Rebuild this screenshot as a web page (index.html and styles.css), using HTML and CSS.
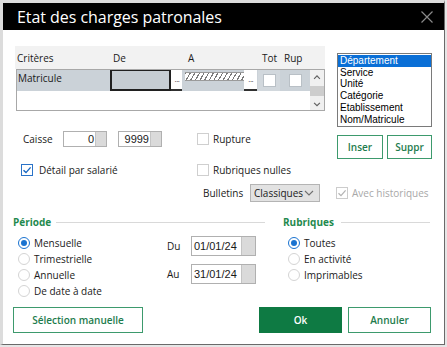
FILE: index.html
```html
<!DOCTYPE html>
<html lang="fr">
<head>
<meta charset="utf-8">
<title>Etat des charges patronales</title>
<link rel="stylesheet" href="styles.css">
</head>
<body>
<div class="window">
  <div class="titlebar">
    <span class="title">Etat des charges patronales</span>
    <svg class="close" width="12" height="12" viewBox="0 0 12 12"><path d="M0.5 0.5 L11.5 11.5 M11.5 0.5 L0.5 11.5" stroke="#8a8a8a" stroke-width="1.2" fill="none"/></svg>
  </div>
  <div class="content">
    <div class="top">
      <div class="left">
        <div class="grid">
          <div class="grid-head">
            <span class="h-crit">Critères</span>
            <span class="h-de">De</span>
            <span class="h-a">A</span>
            <span class="h-tot">Tot</span>
            <span class="h-rup">Rup</span>
          </div>
          <div class="grid-box">
            <div class="grid-rows">
              <div class="grid-row">
                <div class="c-crit">Matricule</div>
                <div class="c-de"></div>
                <div class="c-btn">...</div>
                <div class="c-sp"></div>
                <div class="c-a"><div class="hatch"></div></div>
                <div class="c-btn c-btn2">...</div>
                <div class="c-tot"><span class="gbox"></span></div>
                <div class="c-rup"><span class="gbox"></span></div>
              </div>
            </div>
            <div class="vscroll">
              <svg width="14" height="12" viewBox="0 0 14 12"><path d="M4 7 L7 4 L10 7" stroke="#606060" stroke-width="1.2" fill="none"/></svg>
              <div class="thumb"></div>
              <div class="track"></div>
              <svg width="14" height="12" viewBox="0 0 14 12"><path d="M4 5 L7 8 L10 5" stroke="#606060" stroke-width="1.2" fill="none"/></svg>
            </div>
          </div>
        </div>
        <div class="row-caisse">
          <span class="lbl-caisse">Caisse</span>
          <div class="spin"><span class="val">0</span><span class="spin-btn"></span></div>
          <div class="spin spin2"><span class="val">9999</span><span class="spin-btn"></span></div>
          <label class="chk chk-rupture"><span class="box"></span>Rupture</label>
        </div>
        <div class="row-detail">
          <label class="chk chk-detail"><span class="box checked"><svg width="10" height="10" viewBox="0 0 10 10"><path d="M1.5 5.2 L4 7.6 L8.6 2.4" stroke="#1565c0" stroke-width="1.4" fill="none"/></svg></span>Détail par salarié</label>
          <label class="chk chk-nulles"><span class="box"></span>Rubriques nulles</label>
        </div>
      </div>
      <div class="right">
        <ul class="listbox">
          <li class="sel">Département</li>
          <li>Service</li>
          <li>Unité</li>
          <li>Catégorie</li>
          <li>Etablissement</li>
          <li>Nom/Matricule</li>
        </ul>
        <div class="list-btns">
          <button class="btn btn-small">Inser</button>
          <button class="btn btn-small btn-suppr">Suppr</button>
        </div>
      </div>
    </div>
    <div class="row-bulletins">
      <span class="lbl-bull">Bulletins</span>
      <div class="select">Classiques<svg width="10" height="6" viewBox="0 0 10 6"><path d="M1 1 L5 5 L9 1" stroke="#707070" stroke-width="1.1" fill="none"/></svg></div>
      <label class="chk chk-hist"><span class="box disabled"><svg width="10" height="10" viewBox="0 0 10 10"><path d="M1.5 5.2 L4 7.6 L8.6 2.4" stroke="#b4b4b4" stroke-width="1.3" fill="none"/></svg></span>Avec historiques</label>
    </div>
    <div class="sections">
      <div class="sec sec-periode">
        <div class="sec-head"><span class="sec-title">Période</span><span class="sec-line"></span></div>
        <div class="periode-body">
          <div class="radios">
            <label class="radio"><span class="dot on"></span>Mensuelle</label>
            <label class="radio"><span class="dot"></span>Trimestrielle</label>
            <label class="radio"><span class="dot"></span>Annuelle</label>
            <label class="radio"><span class="dot"></span>De date à date</label>
          </div>
          <div class="dates">
            <div class="date-row"><span class="lbl-date">Du</span><div class="datefield"><span class="val">01/01/24</span><span class="spin-btn"></span></div></div>
            <div class="date-row"><span class="lbl-date">Au</span><div class="datefield"><span class="val">31/01/24</span><span class="spin-btn"></span></div></div>
          </div>
        </div>
      </div>
      <div class="sec sec-rub">
        <div class="sec-head"><span class="sec-title">Rubriques</span><span class="sec-line"></span></div>
        <div class="radios">
          <label class="radio"><span class="dot on"></span>Toutes</label>
          <label class="radio"><span class="dot"></span>En activité</label>
          <label class="radio"><span class="dot"></span>Imprimables</label>
        </div>
      </div>
    </div>
    <div class="footer">
      <button class="btn btn-sel">Sélection manuelle</button>
      <div class="footer-right">
        <button class="btn btn-ok">Ok</button>
        <button class="btn btn-cancel">Annuler</button>
      </div>
    </div>
  </div>
</div>
</body>
</html>
```
FILE: styles.css
```css
html, body {
  margin: 0;
  padding: 0;
  background: #e6e6e6;
}
body {
  font-family: "Open Sans", "Noto Sans", sans-serif;
  font-size: 10px;
  color: #1a1a1a;
}
.window {
  width: 445px;
  height: 345px;
  box-sizing: border-box;
  border-top: 3px solid #dcdcdc;
  border-left: 3px solid #dcdcdc;
  border-right: 1px solid #6a6a6a;
  border-bottom: 1px solid #6a6a6a;
  background: #fff;
  display: flex;
  flex-direction: column;
}
.titlebar {
  height: 27px;
  background: #000;
  display: flex;
  align-items: center;
  justify-content: space-between;
  padding: 0 11px 0 14px;
  flex-shrink: 0;
}
.title {
  color: #fff;
  font-size: 16px;
  letter-spacing: -0.05px;
}
.content {
  padding: 0 10px;
}
.top {
  display: flex;
  margin-top: 16px;
}
.left {
  width: 312px;
}
.grid {
  margin-left: 2px;
  width: 310px;
}
.grid-head {
  height: 23px;
  background: #f2f2f2;
  position: relative;
}
.grid-head span {
  position: absolute;
  top: 5px;
}
.h-crit { left: 2px; }
.h-de { left: 98px; }
.h-a { left: 173px; }
.h-tot { left: 247px; }
.h-rup { left: 269px; }
.grid-box {
  margin-left: 1px;
  height: 42px;
  box-sizing: border-box;
  border: 1px solid #a8a8a8;
  display: flex;
  background: #fff;
}
.grid-rows {
  width: 293px;
}
.grid-row {
  height: 21px;
  display: flex;
  background: #cbd2d8;
}
.c-crit {
  width: 93px;
  padding-left: 1px;
  box-sizing: border-box;
  line-height: 17px;
}
.c-de {
  width: 62px;
  box-sizing: border-box;
  border: 2px solid #202020;
  border-top-width: 1px;
  background: #c6cdd3;
}
.c-btn {
  width: 11px;
  background: #fff;
  border-bottom: 2px solid #303030;
  box-sizing: border-box;
  font-size: 8px;
  line-height: 15px;
  padding-top: 1px;
  text-align: center;
  color: #444;
  letter-spacing: -0.5px;
  overflow: hidden;
}
.c-btn2 { width: 13px; }
.c-sp { width: 3px; }
.c-a {
  width: 59px;
}
.hatch {
  height: 7px;
  margin-top: 2px;
  background: repeating-linear-gradient(-60deg, #fff 0 1.5px, #7a7a7a 1.5px 2.6px, #fff 2.6px 4px);
  border-top: 1px solid #9a9a9a;
  border-bottom: 1px solid #9a9a9a;
}
.c-tot {
  width: 22px;
  margin-left: 1px;
  background: #d2d8dd;
  display: flex;
  justify-content: center;
  padding-top: 4px;
  box-sizing: border-box;
}
.c-rup {
  width: 30px;
  display: flex;
  justify-content: center;
  padding-top: 4px;
  box-sizing: border-box;
}
.gbox {
  width: 11px;
  height: 11px;
  background: #fff;
  border: 1px solid #b9c0c6;
  display: block;
}
.vscroll {
  width: 14px;
  background: #f0f0f0;
  display: flex;
  flex-direction: column;
  align-items: center;
}
.vscroll svg { display: block; margin-top: 2px; }
.vscroll .thumb {
  width: 14px;
  height: 11px;
  background: #cdcdcd;
  margin-top: 2px;
}
.vscroll .track { flex: 1; }
.row-caisse {
  display: flex;
  align-items: center;
  height: 16px;
  margin-top: 20px;
}
.lbl-caisse {
  width: 40px;
  margin-left: 10px;
}
.spin {
  width: 44px;
  height: 16px;
  box-sizing: border-box;
  border: 1px solid #b0b0b0;
  display: flex;
  background: #fff;
}
.spin .val {
  flex: 1;
  text-align: right;
  padding-right: 1px;
  font-family: "Liberation Sans", Arial, sans-serif;
  font-size: 11px;
  line-height: 14px;
}
.spin-btn {
  width: 10px;
  background: #dadada;
  border-left: 1px solid #c4c4c4;
}
.spin2 { margin-left: 11px; }
.chk {
  display: flex;
  align-items: center;
}
.box {
  width: 12px;
  height: 12px;
  box-sizing: border-box;
  border: 1px solid #cfcfcf;
  background: #fff;
  margin-right: 4px;
  display: flex;
  align-items: center;
  justify-content: center;
}
.box.checked { border-color: #2a73c8; }
.box.disabled { border-color: #cccccc; }
.chk-rupture { margin-left: 35px; }
.row-detail {
  display: flex;
  align-items: center;
  height: 16px;
  margin-top: 15px;
}
.chk-detail { margin-left: 8px; width: 176px; }
.chk-detail .box { margin-right: 6px; }
.right {
  margin-left: 12px;
  margin-top: 7px;
  width: 95px;
}
.listbox {
  list-style: none;
  margin: 0;
  padding: 1px 0;
  border: 1px solid #7a7a7a;
  font-family: "Liberation Sans", Arial, sans-serif;
  font-size: 10px;
  line-height: 11.7px;
  color: #000;
}
.listbox li {
  padding-left: 2px;
}
.listbox li.sel {
  background: #0a6fd6;
  color: #fff;
}
.list-btns {
  display: flex;
  justify-content: space-between;
  margin-top: 8px;
}
.btn {
  font-family: "Open Sans", "Noto Sans", sans-serif;
  background: #fff;
  border: 1px solid #3d9a6d;
  color: #1e7c4d;
  font-weight: 600;
  font-size: 10px;
  padding: 0;
  margin: 0;
}
.btn-small {
  width: 46px;
  height: 24px;
}
.btn-suppr { width: 45px; }
.row-bulletins {
  display: flex;
  align-items: center;
  height: 18px;
  margin-top: 6px;
  margin-left: 190px;
}
.lbl-bull {
  width: 47px;
}
.select {
  width: 70px;
  height: 18px;
  box-sizing: border-box;
  background: #e2e2e2;
  border: 1px solid #b4b4b4;
  display: flex;
  align-items: center;
  justify-content: space-between;
  padding: 0 5px 0 3px;
}
.chk-hist {
  margin-left: 16px;
  color: #a8a8a8;
}
.sections {
  display: flex;
  margin-top: 13px;
}
.sec-periode { width: 252px; }
.sec-rub { width: 147px; margin-left: 18px; }
.sec-head {
  display: flex;
  align-items: center;
  height: 14px;
}
.sec-title {
  color: #1f8a4e;
  font-weight: 700;
}
.sec-line {
  flex: 1;
  height: 1px;
  background: #d9d9d9;
  margin-left: 5px;
}
.sec-rub .sec-line { margin-left: 7px; }
.periode-body {
  display: flex;
}
.radios {
  margin-top: 6px;
  margin-left: 5px;
}
.radio {
  display: flex;
  align-items: center;
  height: 16px;
}
.dot {
  width: 12px;
  height: 12px;
  box-sizing: border-box;
  border: 1px solid #d4d4d4;
  border-radius: 50%;
  margin-right: 4px;
  background: #fff;
  display: flex;
  align-items: center;
  justify-content: center;
}
.dot.on { border-color: #1a73d0; }
.dot.on::after {
  content: "";
  width: 6px;
  height: 6px;
  border-radius: 50%;
  background: #1a73d0;
}
.dates {
  margin-left: 65px;
  margin-top: 7px;
}
.date-row {
  display: flex;
  align-items: center;
  height: 20px;
  margin-bottom: 8px;
}
.lbl-date {
  width: 24px;
}
.datefield {
  width: 65px;
  height: 20px;
  box-sizing: border-box;
  border: 1px solid #b0b0b0;
  display: flex;
  background: #fff;
}
.datefield .val {
  flex: 1;
  padding-left: 2px;
  font-family: "Liberation Sans", Arial, sans-serif;
  font-size: 11px;
  line-height: 18px;
}
.datefield .spin-btn { width: 13px; }
.footer {
  display: flex;
  justify-content: space-between;
  margin-top: 8px;
  width: 418px;
}
.footer .btn {
  height: 26px;
}
.btn-sel { width: 130px; }
.footer-right {
  display: flex;
  gap: 6px;
}
.btn-ok {
  width: 83px;
  background: #0e7a43;
  border-color: #0e7a43;
  color: #fff;
}
.btn-cancel { width: 83px; }
```
